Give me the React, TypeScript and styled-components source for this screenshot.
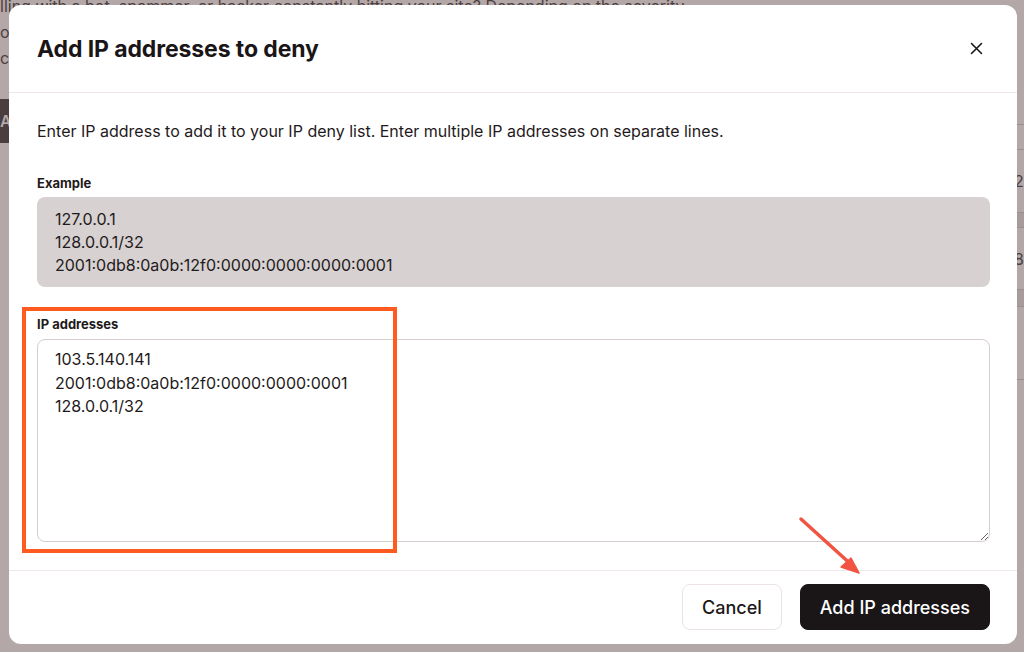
import React from "react";
import styled, { createGlobalStyle } from "styled-components";

const Global = createGlobalStyle`
  html, body { margin: 0; padding: 0; }
  body { font-family: Inter, "Noto Sans", sans-serif; overflow: hidden; }
  * { box-sizing: border-box; }
`;

const Screen = styled.div`
  position: relative;
  width: 1024px;
  height: 652px;
  overflow: hidden;
  background: #b3a7a7;
`;

const BackPage = styled.div`
  display: grid;
  grid-template-columns: 1fr 10px;
  height: 100%;
  color: #4b3f40;
  font-size: 16px;
`;

const BackLeft = styled.div`
  display: flex;
  flex-direction: column;
  white-space: nowrap;
  overflow: hidden;
`;

const BackLine = styled.div<{ $mt?: number }>`
  height: 26px;
  line-height: 26px;
  margin-top: ${(p) => p.$mt ?? 0}px;
`;

const BackButton = styled.div`
  margin-top: 28px;
  width: 60px;
  height: 44px;
  background: #4b3e3f;
  color: #b3a7a7;
  font-weight: 600;
  line-height: 44px;
`;

const BackRight = styled.div`
  display: flex;
  flex-direction: column;
  padding-top: 124px;
  font-size: 16px;
`;

const BackRow = styled.div<{ $h: number; $shade?: boolean }>`
  height: ${(p) => p.$h}px;
  border-top: 1px solid #9c8e8f;
  background: ${(p) => (p.$shade ? "#a99b9c" : "transparent")};
  line-height: ${(p) => p.$h}px;
  overflow: hidden;
`;

const Overlay = styled.div`
  position: absolute;
  inset: 0;
  padding: 5px 7px 8px 9px;
  display: flex;
`;

const Modal = styled.div`
  position: relative;
  flex: 1;
  background: #ffffff;
  border-radius: 12px;
  display: flex;
  flex-direction: column;
  color: #1c1718;
`;

const Header = styled.div`
  height: 88px;
  display: flex;
  align-items: center;
  justify-content: space-between;
  padding: 0 32px 0 28px;
  border-bottom: 1px solid #efe7e7;
`;

const Title = styled.h2`
  margin: 0;
  font-size: 23px;
  font-weight: 700;
  letter-spacing: -0.1px;
  color: #1a1516;
`;

const CloseButton = styled.button`
  width: 18px;
  height: 18px;
  padding: 0;
  border: none;
  background: transparent;
  display: flex;
  align-items: center;
  justify-content: center;
  color: #1c1718;
`;

const Body = styled.div`
  flex: 1;
  padding: 26px 27px 28px 28px;
  display: flex;
  flex-direction: column;
  border-bottom: 1px solid #efe7e7;
`;

const Description = styled.p`
  margin: 0;
  font-size: 16px;
  line-height: 24px;
  color: #1f1a1b;
`;

const Label = styled.div<{ $mt: number }>`
  margin-top: ${(p) => p.$mt}px;
  font-size: 13px;
  line-height: 18px;
  font-weight: 700;
  color: #1f1a1b;
`;

const ExampleBox = styled.div`
  margin-top: 5px;
  height: 90px;
  background: #d7d1d1;
  border-radius: 8px;
  padding: 11px 18px 10px;
  font-size: 16px;
  line-height: 23px;
  color: #1f1a1b;
  white-space: pre;
`;

const TextArea = styled.textarea`
  margin-top: 6px;
  height: 203px;
  width: 100%;
  resize: vertical;
  border: 1px solid #d6cdcd;
  border-radius: 8px;
  padding: 8px 17px;
  font-family: Inter, "Noto Sans", sans-serif;
  font-size: 16px;
  line-height: 23.5px;
  color: #1f1a1b;
  background: #fff;
  outline: none;
`;

const Footer = styled.div`
  height: 73px;
  display: flex;
  align-items: center;
  justify-content: flex-end;
  gap: 18px;
  padding: 0 27px 1px 0;
`;

const Button = styled.button<{ $primary?: boolean }>`
  height: 46px;
  padding: 0 19px;
  border-radius: 8px;
  font-family: Inter, "Noto Sans", sans-serif;
  font-size: 18px;
  font-weight: 500;
  border: 1px solid ${(p) => (p.$primary ? "#1a1617" : "#ece4e4")};
  background: ${(p) => (p.$primary ? "#1a1617" : "#ffffff")};
  color: ${(p) => (p.$primary ? "#ffffff" : "#1c1718")};
`;

const Highlight = styled.div`
  position: absolute;
  left: 13px;
  top: 302px;
  width: 375px;
  height: 246px;
  border: 4px solid #ff5a1f;
  pointer-events: none;
`;

const Arrow = styled.svg`
  position: absolute;
  left: 776px;
  top: 499px;
  pointer-events: none;
`;

export default function App() {
  return (
    <>
      <Global />
      <Screen>
        <BackPage>
          <BackLeft>
            <BackLine $mt={-7}>lling with a bot, spammer, or hacker constantly hitting your site? Depending on the severity</BackLine>
            <BackLine>ou</BackLine>
            <BackLine>ck</BackLine>
            <BackButton>Ad</BackButton>
          </BackLeft>
          <BackRight>
            <BackRow $h={25} />
            <BackRow $h={63}>2</BackRow>
            <BackRow $h={15} $shade />
            <BackRow $h={62}>8</BackRow>
            <BackRow $h={17} $shade />
            <BackRow $h={73} />
            <BackRow $h={60} />
          </BackRight>
        </BackPage>
        <Overlay>
          <Modal>
            <Header>
              <Title>Add IP addresses to deny</Title>
              <CloseButton aria-label="Close">
                <svg width="13" height="13" viewBox="0 0 13 13">
                  <path d="M1.5 1.5 L11.5 11.5 M11.5 1.5 L1.5 11.5" stroke="currentColor" strokeWidth="1.6" strokeLinecap="round" />
                </svg>
              </CloseButton>
            </Header>
            <Body>
              <Description>
                Enter IP address to add it to your IP deny list. Enter multiple IP addresses on separate lines.
              </Description>
              <Label $mt={31}>Example</Label>
              <ExampleBox>{"127.0.0.1\n128.0.0.1/32\n2001:0db8:0a0b:12f0:0000:0000:0000:0001"}</ExampleBox>
              <Label $mt={28}>IP addresses</Label>
              <TextArea defaultValue={"103.5.140.141\n2001:0db8:0a0b:12f0:0000:0000:0001\n128.0.0.1/32"} />
            </Body>
            <Footer>
              <Button>Cancel</Button>
              <Button $primary>Add IP addresses</Button>
            </Footer>
            <Highlight />
            <Arrow width="90" height="90" viewBox="0 0 90 90">
              <line x1="16" y1="15" x2="70" y2="64" stroke="#f25444" strokeWidth="3.5" strokeLinecap="round" />
              <path d="M74 69 L56 63 L66 54 Z" fill="#f25444" stroke="#f25444" strokeWidth="1.5" strokeLinejoin="round" />
            </Arrow>
          </Modal>
        </Overlay>
      </Screen>
    </>
  );
}
